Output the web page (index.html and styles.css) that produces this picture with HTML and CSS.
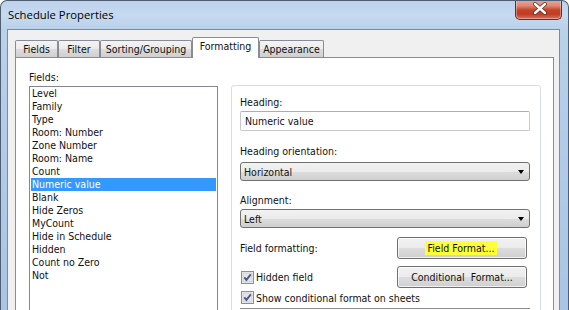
FILE: index.html
```html
<!DOCTYPE html>
<html>
<head>
<meta charset="utf-8">
<link rel="stylesheet" href="styles.css">
</head>
<body>
<div class="window">
  <div class="titlebar">
    <span class="title">Schedule Properties</span>
    <div class="close">
      <svg width="47" height="19" viewBox="0 0 47 19">
        <path d="M19 5 L29 14 M29 5 L19 14" stroke="#6a2a1e" stroke-width="4" stroke-linecap="round" fill="none"/>
        <path d="M19 5 L29 14 M29 5 L19 14" stroke="#ffffff" stroke-width="2.4" stroke-linecap="round" fill="none"/>
      </svg>
    </div>
  </div>
  <div class="client">
    <div class="tabs">
      <div class="tab w-fields">Fields</div>
      <div class="tab w-filter">Filter</div>
      <div class="tab w-sort">Sorting/Grouping</div>
      <div class="tab tab-active w-format">Formatting</div>
      <div class="tab w-appear">Appearance</div>
    </div>
    <div class="panel">
      <div class="left">
        <div class="lbl">Fields:</div>
        <ul class="list">
          <li>Level</li>
          <li>Family</li>
          <li>Type</li>
          <li>Room: Number</li>
          <li>Zone Number</li>
          <li>Room: Name</li>
          <li>Count</li>
          <li class="sel">Numeric value</li>
          <li>Blank</li>
          <li>Hide Zeros</li>
          <li>MyCount</li>
          <li>Hide in Schedule</li>
          <li>Hidden</li>
          <li>Count no Zero</li>
          <li>Not</li>
        </ul>
      </div>
      <div class="group">
        <div class="glbl">Heading:</div>
        <div class="input">Numeric value</div>
        <div class="glbl m-orient">Heading orientation:</div>
        <div class="select s-orient"><span>Horizontal</span><span class="arrow"></span></div>
        <div class="glbl m-align">Alignment:</div>
        <div class="select s-align"><span>Left</span><span class="arrow"></span></div>
        <div class="row r-field">
          <span>Field formatting:</span>
          <div class="btn"><span class="hl">Field Format...</span></div>
        </div>
        <div class="row r-hidden">
          <span class="chk">
            <svg class="cb" width="13" height="13" viewBox="0 0 13 13">
              <rect x="0.5" y="0.5" width="12" height="12" fill="#f4f4f4" stroke="#8e8f8f"/>
              <rect x="2" y="2" width="9" height="9" fill="#e4e6ea" stroke="#c8c8c8" stroke-width="0.8"/>
              <path d="M3.3 6.4 L5.4 8.9 L9.8 3.3" stroke="#4a5c8c" stroke-width="1.9" fill="none"/>
            </svg>
            Hidden field
          </span>
          <div class="btn">Conditional&nbsp; Format...</div>
        </div>
        <div class="row r-show">
          <span class="chk">
            <svg class="cb" width="13" height="13" viewBox="0 0 13 13">
              <rect x="0.5" y="0.5" width="12" height="12" fill="#f4f4f4" stroke="#8e8f8f"/>
              <rect x="2" y="2" width="9" height="9" fill="#e4e6ea" stroke="#c8c8c8" stroke-width="0.8"/>
              <path d="M3.3 6.4 L5.4 8.9 L9.8 3.3" stroke="#4a5c8c" stroke-width="1.9" fill="none"/>
            </svg>
            Show conditional format on sheets
          </span>
        </div>
        <div class="nextbox"></div>
      </div>
    </div>
  </div>
</div>
</body>
</html>
```
FILE: styles.css
```css
* { box-sizing: border-box; }
html, body { margin: 0; padding: 0; }
body {
  width: 569px;
  height: 310px;
  overflow: hidden;
  background: #ffffff;
  font-family: "DejaVu Sans Condensed", "Liberation Sans", sans-serif;
  font-size: 10.5px;
  color: #111;
}
.window {
  width: 569px;
  height: 310px;
  border: 1px solid #4f5e72;
  border-bottom: none;
  border-radius: 7px 7px 0 0;
  background: linear-gradient(to bottom, #bdd3eb 0px, #c6daf0 14px, #bad1ea 28px, #b4cce8 120px, #a9c4e5 310px);
  overflow: hidden;
  display: flex;
  flex-direction: column;
}
.titlebar {
  height: 28px;
  flex: none;
  display: flex;
  align-items: flex-start;
}
.title {
  font-family: "Open Sans", "Noto Sans", sans-serif;
  font-size: 11.3px;
  padding: 6px 0 0 7px;
  color: #000;
}
.close {
  margin-left: auto;
  margin-right: 6px;
  margin-top: -1px;
  width: 47px;
  height: 20px;
  border: 1px solid #6b2b20;
  border-top: none;
  border-radius: 0 0 5px 5px;
  background: linear-gradient(to bottom, #e9a999 0px, #dc8673 6px, #c5432a 10px, #c13b22 14px, #d8735b 19px);
  box-shadow: inset 0 0 0 1px rgba(255,255,255,0.35);
}
.close svg { display: block; margin: -1px 0 0 0; }
.client {
  flex: 1;
  margin: 0 8px 0 6px;
  border: 1px solid #7d8b9d;
  border-bottom: none;
  background: #f0f0f0;
  padding: 7px 5px 0 7px;
  display: flex;
  flex-direction: column;
}
.tabs {
  height: 20px;
  display: flex;
  align-items: flex-end;
  position: relative;
  z-index: 2;
}
.tab {
  height: 17px;
  border: 1px solid #898c95;
  border-bottom: none;
  border-radius: 2px 2px 0 0;
  background: linear-gradient(to bottom, #f3f3f3 0%, #ebebeb 50%, #dddddd 51%, #cfcfcf 100%);
  display: flex;
  align-items: center;
  justify-content: center;
  padding-bottom: 1px;
  white-space: nowrap;
}
.tab-active {
  height: 21px;
  margin-bottom: -1px;
  background: #ffffff;
  padding-bottom: 4px;
}
.w-fields { width: 43px; }
.w-filter { width: 42px; }
.w-sort { width: 92px; }
.w-format { width: 67px; }
.w-appear { width: 65px; }
.panel {
  flex: 1;
  background: #ffffff;
  border: 1px solid #898c95;
  border-bottom: none;
  padding: 12px 0 0 13px;
  display: flex;
  align-items: flex-start;
  gap: 13px;
}
.left { width: 189px; flex: none; }
.lbl { height: 14px; line-height: 14px; margin-bottom: 2px; }
.list {
  list-style: none;
  margin: 0;
  padding: 0 1px;
  border: 1px solid #828790;
  height: 240px;
}
.list li {
  height: 13px;
  line-height: 13px;
  padding-left: 1px;
  white-space: nowrap;
}
.list li.sel { background: #3399ff; color: #ffffff; }
.group {
  width: 310px;
  flex: none;
  margin-top: 15px;
  height: 240px;
  border: 1px solid #d5dfe5;
  border-radius: 3px;
  padding: 9px 10px 0 8px;
}
.glbl { height: 14px; line-height: 14px; }
.m-orient { margin-top: 13px; }
.m-align { margin-top: 12px; }
.input {
  margin-top: 2px;
  height: 20px;
  border: 1px solid #c5c8cc;
  border-top-color: #abadb3;
  border-radius: 2px;
  padding-left: 4px;
  line-height: 18px;
  background: #fff;
}
.select {
  height: 19px;
  border: 1px solid #707070;
  border-radius: 3px;
  background: linear-gradient(to bottom, #f2f2f2 0%, #ebebeb 50%, #dddddd 51%, #cfcfcf 100%);
  display: flex;
  align-items: center;
  justify-content: space-between;
  padding: 0 5px 0 3px;
}
.s-orient { margin-top: 4px; }
.s-align { margin-top: 2px; }
.arrow {
  width: 0;
  height: 0;
  border-left: 3.5px solid transparent;
  border-right: 3.5px solid transparent;
  border-top: 4px solid #000;
}
.row {
  display: flex;
  align-items: center;
  justify-content: space-between;
}
.r-field { margin-top: 9px; height: 22px; }
.r-hidden { margin-top: 7px; height: 22px; }
.r-show { margin-top: 2px; height: 15px; }
.btn {
  width: 130px;
  height: 22px;
  margin-right: 3px;
  border: 1px solid #707070;
  border-radius: 3px;
  background: linear-gradient(to bottom, #f2f2f2 0%, #ebebeb 50%, #dddddd 51%, #cfcfcf 100%);
  box-shadow: inset 0 0 0 1px rgba(255,255,255,0.7);
  display: flex;
  align-items: center;
  justify-content: center;
  white-space: nowrap;
}
.hl { background: #ffff3a; padding: 1px 3px; margin-left: -2px; }
.chk { display: flex; align-items: center; white-space: nowrap; }
.cb { display: block; margin: 0 2px 0 1px; flex: none; }
.nextbox {
  margin-top: 3px;
  height: 20px;
  border-top: 1px solid #8a8a8a;
}
```
